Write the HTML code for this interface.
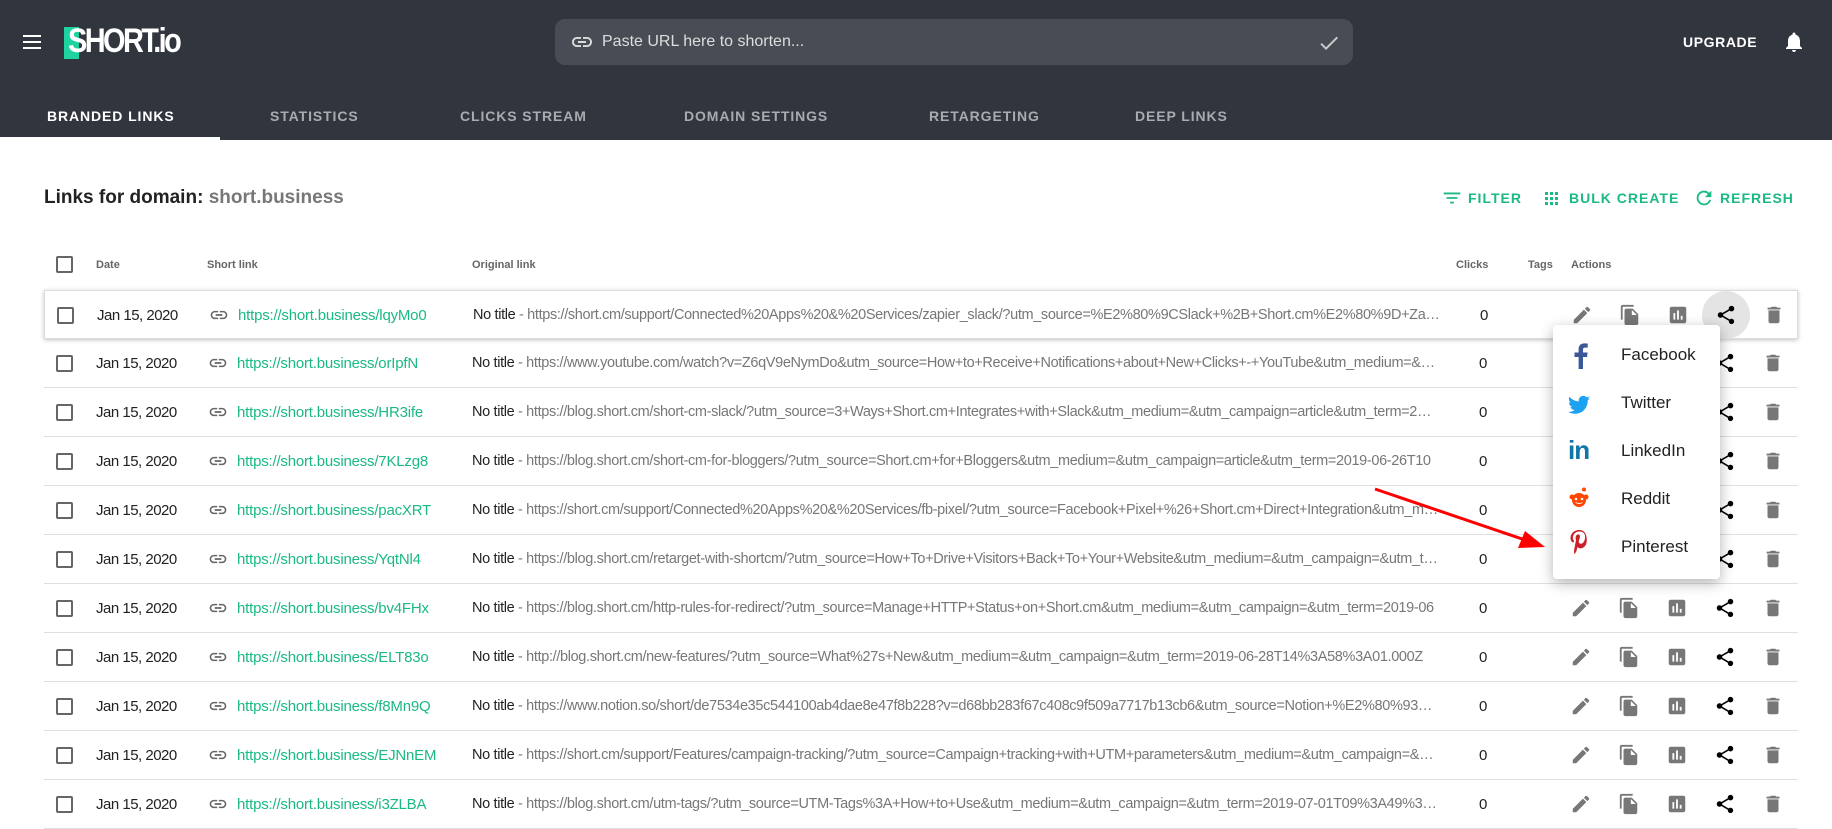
<!DOCTYPE html>
<html><head><meta charset="utf-8"><style>
*{box-sizing:border-box;margin:0;padding:0}
body{width:1832px;height:826px;overflow:hidden;background:#fff;font-family:"Liberation Sans",Arial,sans-serif;position:relative}
.a{position:absolute}
.hdr{left:0;top:0;width:1832px;height:140px;background:#31353e}
.tab{top:108px;font-size:14px;letter-spacing:.9px;color:#a9abb0;font-weight:bold}
.g{color:#1bb983}
.th{top:259px;font-size:11px;color:#666;font-weight:bold}
.row{left:44px;width:1754px;height:49px;border-bottom:1px solid #e0e0e0}
.row>*{position:absolute}
.cb{left:12px;top:16px;width:17px;height:17px;border:2px solid #666;border-radius:2px}
.dt{left:52px;top:16px;font-size:15px;color:#222;letter-spacing:-.5px}
.li{left:164px;top:14px}
.sl{left:193px;top:16px;font-size:15px;color:#1bb983;letter-spacing:-.2px}
.ol{left:428px;top:16px;width:967px;font-size:14.5px;color:#777;white-space:nowrap;overflow:hidden;text-overflow:ellipsis;letter-spacing:-.35px}
.ol b{font-weight:normal;color:#222}
.ck{left:1435px;top:16px;font-size:15px;color:#222}
.ic{top:13px}
.menu{left:1553px;top:325px;width:167px;height:254px;background:#fff;border-radius:4px;box-shadow:0 4px 14px rgba(0,0,0,.3)}
.mi{position:absolute;left:68px;font-size:17px;color:#222}
.btn{top:190px;font-size:14px;font-weight:bold;letter-spacing:1px}
</style></head><body>
<div class="a hdr"></div>
<svg class="a" style="left:22px;top:32px" width="20" height="20" viewBox="0 0 20 20"><rect x="1" y="3" width="18" height="2" fill="#fff"/><rect x="1" y="9" width="18" height="2" fill="#fff"/><rect x="1" y="15" width="18" height="2" fill="#fff"/></svg>
<div class="a" style="left:64px;top:27px;width:15px;height:32px;background:#1ed3a0"></div>
<div class="a" style="left:68px;top:22px;font-size:34px;font-weight:bold;color:#fff;letter-spacing:-3px;transform:scaleX(.85);transform-origin:left">SHORT.io</div>
<div class="a" style="left:555px;top:19px;width:798px;height:46px;background:#484c55;border-radius:10px"></div>
<svg class="a" style="left:570px;top:30px" width="24" height="24" viewBox="0 0 24 24"><path fill="#ddd" d="M3.9 12c0-1.71 1.39-3.1 3.1-3.1h4V7H7c-2.760 0-5 2.24-5 5s2.24 5 5 5h4v-1.9H7c-1.71 0-3.1-1.39-3.1-3.1zM8 13h8v-2H8v2zm9-6h-4v1.9h4c1.71 0 3.1 1.39 3.1 3.1s-1.39 3.1-3.1 3.1h-4V17h4c2.76 0 5-2.24 5-5s-2.24-5-5-5z"/></svg>
<div class="a" style="left:602px;top:33px;font-size:16px;color:#ddd">Paste URL here to shorten...</div>
<svg class="a" style="left:1317px;top:31px" width="24" height="24" viewBox="0 0 24 24"><path fill="#ccc" d="M9 16.2L4.8 12l-1.4 1.4L9 19 21 7l-1.4-1.4z"/></svg>
<div class="a" style="left:1683px;top:34px;font-size:14px;font-weight:bold;color:#fff;letter-spacing:.6px">UPGRADE</div>
<svg class="a" style="left:1782px;top:30px" width="24" height="24" viewBox="0 0 24 24"><path fill="#fff" d="M12 22c1.1 0 2-.9 2-2h-4c0 1.1.89 2 2 2zm6-6v-5c0-3.07-1.64-5.64-4.5-6.32V4c0-.83-.67-1.5-1.5-1.5s-1.5.67-1.5 1.5v.68C7.63 5.36 6 7.92 6 11v5l-2 2v1h16v-1l-2-2z"/></svg>
<div class="a tab" style="left:47px;color:#fff">BRANDED LINKS</div>
<div class="a" style="left:0;top:137px;width:220px;height:3px;background:#fff"></div>
<div class="a tab" style="left:270px">STATISTICS</div>
<div class="a tab" style="left:460px">CLICKS STREAM</div>
<div class="a tab" style="left:684px">DOMAIN SETTINGS</div>
<div class="a tab" style="left:929px">RETARGETING</div>
<div class="a tab" style="left:1135px">DEEP LINKS</div>

<div class="a" style="left:44px;top:187px;font-size:19px;color:#222;font-weight:bold">Links for domain: <span style="color:#777">short.business</span></div>
<svg class="a" style="left:1441px;top:187px" width="22" height="22" viewBox="0 0 24 24"><path fill="#1bb983" d="M10 18h4v-2h-4v2zM3 6v2h18V6H3zm3 7h12v-2H6v2z"/></svg>
<div class="a g btn" style="left:1468px">FILTER</div>
<svg class="a" style="left:1544px;top:190px" width="16" height="16" viewBox="0 0 16 16" fill="#1bb983"><rect x="1" y="2" width="3" height="3"/><rect x="6" y="2" width="3" height="3"/><rect x="11" y="2" width="3" height="3"/><rect x="1" y="7" width="3" height="3"/><rect x="6" y="7" width="3" height="3"/><rect x="11" y="7" width="3" height="3"/><rect x="1" y="12" width="3" height="3"/><rect x="6" y="12" width="3" height="3"/><rect x="11" y="12" width="3" height="3"/></svg>
<div class="a g btn" style="left:1569px">BULK CREATE</div>
<svg class="a" style="left:1693px;top:187px" width="22" height="22" viewBox="0 0 24 24"><path fill="#1bb983" d="M17.65 6.35A7.958 7.958 0 0012 4c-4.42 0-7.99 3.58-7.99 8s3.57 8 7.99 8c3.73 0 6.84-2.55 7.73-6h-2.08A5.99 5.99 0 0112 18c-3.31 0-6-2.69-6-6s2.69-6 6-6c1.66 0 3.14.69 4.22 1.78L13 11h7V4l-2.35 2.35z"/></svg>
<div class="a g btn" style="left:1720px">REFRESH</div>

<div class="a" style="left:56px;top:256px;width:17px;height:17px;border:2px solid #666;border-radius:2px"></div>
<div class="a th" style="left:96px">Date</div>
<div class="a th" style="left:207px">Short link</div>
<div class="a th" style="left:472px">Original link</div>
<div class="a th" style="left:1456px">Clicks</div>
<div class="a th" style="left:1528px">Tags</div>
<div class="a th" style="left:1571px">Actions</div>

<svg width="0" height="0" style="position:absolute"><defs>
<symbol id="lk" viewBox="0 0 24 24"><path fill="#666" d="M3.9 12c0-1.71 1.39-3.1 3.1-3.1h4V7H7c-2.76 0-5 2.24-5 5s2.24 5 5 5h4v-1.9H7c-1.71 0-3.1-1.39-3.1-3.1zM8 13h8v-2H8v2zm9-6h-4v1.9h4c1.71 0 3.1 1.39 3.1 3.1s-1.39 3.1-3.1 3.1h-4V17h4c2.76 0 5-2.24 5-5s-2.24-5-5-5z"/></symbol>
<symbol id="ed" viewBox="0 0 24 24"><path fill="#777" d="M3 17.25V21h3.75L17.81 9.94l-3.75-3.75L3 17.25zM20.71 7.04a1 1 0 000-1.41l-2.34-2.34a1 1 0 00-1.41 0l-1.83 1.83 3.75 3.75 1.83-1.83z"/></symbol>
<symbol id="cp" viewBox="0 0 24 24"><path fill="#777" d="M16 1H4c-1.1 0-2 .9-2 2v14h2V3h12V1zm-1 4l6 6v10c0 1.1-.9 2-2 2H7.99C6.89 23 6 22.1 6 21l.01-14c0-1.1.89-2 1.99-2h7zm-1 7h5.5L14 6.5V12z"/></symbol>
<symbol id="st" viewBox="0 0 24 24"><path fill="#777" d="M19 3H5c-1.1 0-2 .9-2 2v14c0 1.1.9 2 2 2h14c1.1 0 2-.9 2-2V5c0-1.1-.9-2-2-2zM9 17H7v-7h2v7zm4 0h-2V7h2v10zm4 0h-2v-4h2v4z"/></symbol>
<symbol id="sh" viewBox="0 0 24 24"><path fill="#000" d="M18 16.08c-.76 0-1.44.3-1.96.77L8.91 12.7c.05-.23.09-.46.09-.7s-.04-.47-.09-.7l7.05-4.11c.54.5 1.25.81 2.04.81 1.66 0 3-1.34 3-3s-1.34-3-3-3-3 1.34-3 3c0 .24.04.47.09.7L8.04 9.81C7.5 9.31 6.79 9 6 9c-1.66 0-3 1.34-3 3s1.34 3 3 3c.79 0 1.5-.31 2.04-.81l7.12 4.16c-.05.21-.08.43-.08.65 0 1.61 1.31 2.92 2.92 2.92s2.92-1.31 2.92-2.92-1.31-2.92-2.92-2.92z"/></symbol>
<symbol id="dl" viewBox="0 0 24 24"><path fill="#777" d="M6 19c0 1.1.9 2 2 2h8c1.1 0 2-.9 2-2V7H6v12zM19 4h-3.5l-1-1h-5l-1 1H5v2h14V4z"/></symbol>
</defs></svg>

<div id="rows"></div>
<script>
var d=[["lqyMo0","https://short.cm/support/Connected%20Apps%20&%20Services/zapier_slack/?utm_source=%E2%80%9CSlack+%2B+Short.cm%E2%80%9D+Zap&utm_medium=&utm_campaign="],
["orIpfN","https://www.youtube.com/watch?v=Z6qV9eNymDo&utm_source=How+to+Receive+Notifications+about+New+Clicks+-+YouTube&utm_medium=&utm_campaign="],
["HR3ife","https://blog.short.cm/short-cm-slack/?utm_source=3+Ways+Short.cm+Integrates+with+Slack&utm_medium=&utm_campaign=article&utm_term=2019"],
["7KLzg8","https://blog.short.cm/short-cm-for-bloggers/?utm_source=Short.cm+for+Bloggers&utm_medium=&utm_campaign=article&utm_term=2019-06-26T10"],
["pacXRT","https://short.cm/support/Connected%20Apps%20&%20Services/fb-pixel/?utm_source=Facebook+Pixel+%26+Short.cm+Direct+Integration&utm_medium="],
["YqtNl4","https://blog.short.cm/retarget-with-shortcm/?utm_source=How+To+Drive+Visitors+Back+To+Your+Website&utm_medium=&utm_campaign=&utm_term="],
["bv4FHx","https://blog.short.cm/http-rules-for-redirect/?utm_source=Manage+HTTP+Status+on+Short.cm&utm_medium=&utm_campaign=&utm_term=2019-06"],
["ELT83o","http://blog.short.cm/new-features/?utm_source=What%27s+New&utm_medium=&utm_campaign=&utm_term=2019-06-28T14%3A58%3A01.000Z"],
["f8Mn9Q","https://www.notion.so/short/de7534e35c544100ab4dae8e47f8b228?v=d68bb283f67c408c9f509a7717b13cb6&utm_source=Notion+%E2%80%93+Short"],
["EJNnEM","https://short.cm/support/Features/campaign-tracking/?utm_source=Campaign+tracking+with+UTM+parameters&utm_medium=&utm_campaign=&utm"],
["i3ZLBA","https://blog.short.cm/utm-tags/?utm_source=UTM-Tags%3A+How+to+Use&utm_medium=&utm_campaign=&utm_term=2019-07-01T09%3A49%3A01.000Z"]];
var h="";
d.forEach(function(r,i){
var top=290+i*49;
var st=i==0?"border:1px solid #ddd;box-shadow:0 1px 4px rgba(0,0,0,.25);":"";
var ic=function(id,x){return '<svg class="ic" style="left:'+x+'px" width="22" height="22"><use href="#'+id+'"/></svg>';};
h+='<div class="a row" style="top:'+top+'px;'+st+'">'+
(i==0?'<div style="left:1657px;top:0px;width:48px;height:48px;border-radius:50%;background:#e4e4e4"></div>':'')+
'<div class="cb"></div><div class="dt">Jan 15, 2020</div>'+
'<svg class="li" width="20" height="20"><use href="#lk"/></svg>'+
'<div class="sl">https://short.business/'+r[0]+'</div>'+
'<div class="ol"><b>No title</b> - '+r[1].replace(/&/g,"&amp;")+'</div>'+
'<div class="ck">0</div>'+ic("ed",1526)+ic("cp",1574)+ic("st",1622)+ic("sh",1670)+ic("dl",1718)+'</div>';
});
document.getElementById("rows").innerHTML=h;
</script>

<div class="a menu">
 <svg class="a" style="left:16px;top:18px" width="24" height="26" viewBox="0 0 24 26"><path fill="#3b5998" d="M14 26V14h4l.6-4.5H14V6.8c0-1.3.4-2.2 2.2-2.2h2.5V.6C18.3.5 16.9.4 15.3.4 11.8.4 9.6 2.5 9.6 6.3v3.2H5.5V14h4.1v12z"/></svg>
 <div class="mi" style="top:20px">Facebook</div>
 <svg class="a" style="left:15px;top:70px" width="22" height="20" viewBox="0 0 24 20"><path fill="#1da1f2" d="M24 2.4c-.9.4-1.8.7-2.8.8 1-.6 1.8-1.6 2.2-2.7-1 .6-2 1-3.1 1.2C19.4.7 18.1.1 16.6.1c-2.7 0-4.9 2.2-4.9 4.9 0 .4 0 .8.1 1.1C7.7 5.9 4.1 4 1.7 1 1.2 1.7 1 2.6 1 3.5c0 1.7.9 3.2 2.2 4.1-.8 0-1.6-.2-2.2-.6v.1c0 2.4 1.7 4.4 3.9 4.8-.4.1-.8.2-1.3.2-.3 0-.6 0-.9-.1.6 2 2.4 3.4 4.6 3.4-1.7 1.3-3.8 2.1-6.1 2.1-.4 0-.8 0-1.2-.1 2.2 1.4 4.8 2.2 7.5 2.2 9.1 0 14-7.5 14-14v-.6c1-.7 1.8-1.6 2.5-2.6z"/></svg>
 <div class="mi" style="top:68px">Twitter</div>
 <div class="a" style="left:15px;top:110px;font-size:26px;font-weight:bold;color:#0e76a8;letter-spacing:-1px">in</div>
 <div class="mi" style="top:116px">LinkedIn</div>
 <svg class="a" style="left:15px;top:162px" width="22" height="20" viewBox="0 0 22 20"><circle cx="11" cy="13" r="7" fill="#ff4500"/><circle cx="4" cy="10" r="2.5" fill="#ff4500"/><circle cx="18" cy="10" r="2.5" fill="#ff4500"/><circle cx="16" cy="2.5" r="2" fill="#ff4500"/><circle cx="8" cy="12" r="1.3" fill="#fff"/><circle cx="14" cy="12" r="1.3" fill="#fff"/><path d="M7.5 15.5q3.5 2 7 0" stroke="#fff" fill="none" stroke-width="1"/></svg>
 <div class="mi" style="top:164px">Reddit</div>
 <svg class="a" style="left:16px;top:204px" width="20" height="28" viewBox="0 0 20 28"><path fill="#cb2027" d="M10.5 1C4.5 1 1.5 5.2 1.5 8.8c0 2.1.8 4 2.6 4.7.3.1.6 0 .6-.3l.3-1c.1-.3 0-.4-.2-.7-.5-.6-.9-1.5-.9-2.6 0-3.4 2.5-6.4 6.6-6.4 3.6 0 5.600 2.2 5.6 5.1 0 3.8-1.7 7.1-4.2 7.1-1.4 0-2.4-1.1-2.1-2.6.4-1.7 1.2-3.5 1.2-4.7 0-1.1-.6-2-1.8-2-1.4 0-2.6 1.5-2.6 3.5 0 1.3.4 2.1.4 2.1L5.3 20c-.5 2.1-.1 4.6 0 4.9 0 .1.2.2.3.1.1-.2 1.6-2 2.1-3.9l.8-3.2c.4.8 1.6 1.5 2.9 1.5 3.8 0 6.4-3.5 6.4-8.1C17.8 4.4 14.8 1 10.5 1z"/></svg>
 <div class="mi" style="top:212px">Pinterest</div>
</div>
<svg class="a" style="left:0;top:0" width="1832" height="826"><line x1="1375" y1="489" x2="1525" y2="540" stroke="#f00" stroke-width="3"/><polygon points="1545,547 1518,548 1525,531" fill="#f00"/></svg>
</body></html>
